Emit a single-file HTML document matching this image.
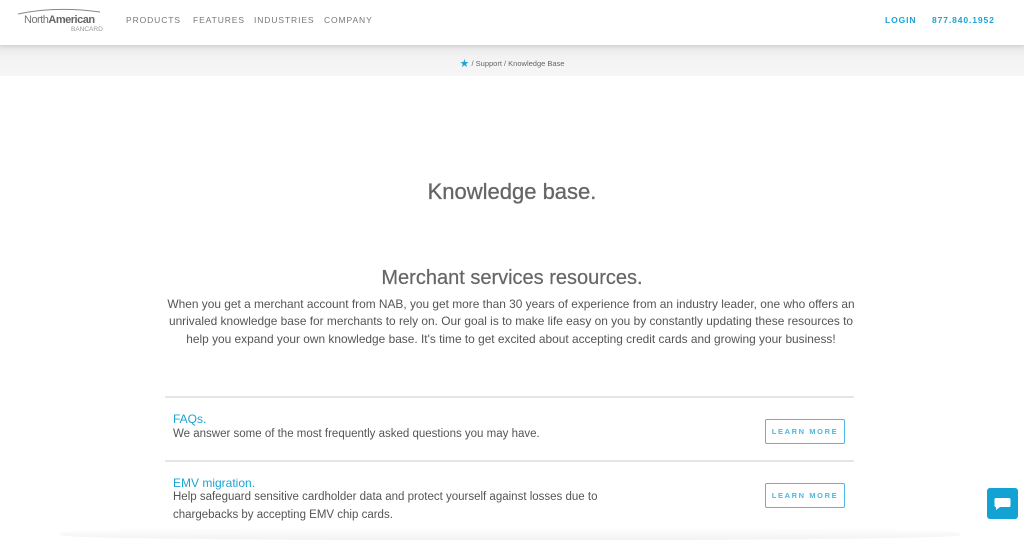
<!DOCTYPE html>
<html><head><meta charset="utf-8"><style>
*{margin:0;padding:0;box-sizing:border-box}
body{width:1024px;height:540px;overflow:hidden;background:#fff;font-family:"Liberation Sans",sans-serif;color:#555;position:relative}
.hdr{position:absolute;left:0;top:0;width:1024px;height:45px;background:#fff;box-shadow:0 1px 4px rgba(0,0,0,.12);z-index:2}
.nav{position:absolute;top:15px;font-size:8.5px;letter-spacing:0.9px;color:#777}
.rnav{position:absolute;top:15px;font-size:8.5px;letter-spacing:0.9px;color:#1ba3d6;font-weight:bold}
.crumb{position:absolute;left:0;top:45px;width:1024px;height:31px;background:linear-gradient(#e6e6e6,#f3f3f3 40%,#f6f6f6);font-size:7.5px;color:#666;text-align:center;padding-top:12px}
h1{position:absolute;top:179px;width:1024px;text-align:center;font-size:22px;font-weight:normal;color:#666;-webkit-text-stroke:0.3px #666}
h2{position:absolute;top:267px;width:1024px;text-align:center;font-size:20px;font-weight:normal;color:#666;-webkit-text-stroke:0.2px #666}
.p{position:absolute;top:296px;left:160px;width:702px;text-align:center;font-size:11.9px;line-height:17.3px;color:#555}
.hr{position:absolute;left:165px;width:689px;height:2px;background:#e5e5e5}
.t{position:absolute;left:173px;font-size:12px;color:#1ba3d6}
.d{position:absolute;left:173px;font-size:11.5px;line-height:17.5px;color:#555}
.btn{position:absolute;left:765px;width:80px;height:25px;border:1.5px solid #4bb9e2;border-radius:2px;color:#4bb9e2;font-size:7.5px;letter-spacing:1.6px;text-align:center;line-height:23px;font-weight:bold}
.chat{position:absolute;left:987px;top:488px;width:31px;height:31px;background:#12a3d4;border-radius:3px}
.foot{position:absolute;left:60px;top:528px;width:900px;height:12px;background:linear-gradient(#fff,#f2f2f2);border-radius:40%}
</style></head><body>
<div class="hdr">
 <svg style="position:absolute;left:16px;top:7px" width="96" height="26" viewBox="0 0 96 26">
  <path d="M2 7 Q40 -1 84 5" stroke="#888" stroke-width="1" fill="none"/>
  <text x="8" y="16" font-family="Liberation Sans" font-size="11" fill="#777" letter-spacing="-0.5">North<tspan font-weight="bold" fill="#666">American</tspan></text>
  <text x="55" y="24" font-family="Liberation Sans" font-size="6.5" fill="#999">BANCARD</text>
 </svg>
 <div class="nav" style="left:126px">PRODUCTS</div>
 <div class="nav" style="left:193px">FEATURES</div>
 <div class="nav" style="left:254px">INDUSTRIES</div>
 <div class="nav" style="left:324px">COMPANY</div>
 <div class="rnav" style="left:885px">LOGIN</div>
 <div class="rnav" style="left:932px">877.840.1952</div>
</div>
<div class="crumb"><span style="color:#1ba3d6;font-size:11px;vertical-align:-1px">★</span> / Support / Knowledge Base</div>
<h1>Knowledge base.</h1>
<h2>Merchant services resources.</h2>
<div class="p">When you get a merchant account from NAB, you get more than 30 years of experience from an industry leader, one who offers an unrivaled knowledge base for merchants to rely on. Our goal is to make life easy on you by constantly updating these resources to help you expand your own knowledge base. It's time to get excited about accepting credit cards and growing your business!</div>
<div class="hr" style="top:396px"></div>
<div class="t" style="top:412px">FAQs.</div>
<div class="d" style="top:426px">We answer some of the most frequently asked questions you may have.</div>
<div class="btn" style="top:419px">LEARN MORE</div>
<div class="hr" style="top:460px"></div>
<div class="t" style="top:476px">EMV migration.</div>
<div class="d" style="top:489px">Help safeguard sensitive cardholder data and protect yourself against losses due to<br>chargebacks by accepting EMV chip cards.</div>
<div class="btn" style="top:483px">LEARN MORE</div>
<div class="foot"></div>
<div class="chat"><svg width="31" height="31" viewBox="0 0 31 31"><path d="M9 10 h13 a1.5 1.5 0 0 1 1.5 1.5 v6 a1.5 1.5 0 0 1 -1.5 1.5 h-9 l-4 3 v-3 a1.5 1.5 0 0 1 -1.5 -1.5 v-6 a1.5 1.5 0 0 1 1.5 -1.5z" fill="#fff"/></svg></div>
</body></html>
